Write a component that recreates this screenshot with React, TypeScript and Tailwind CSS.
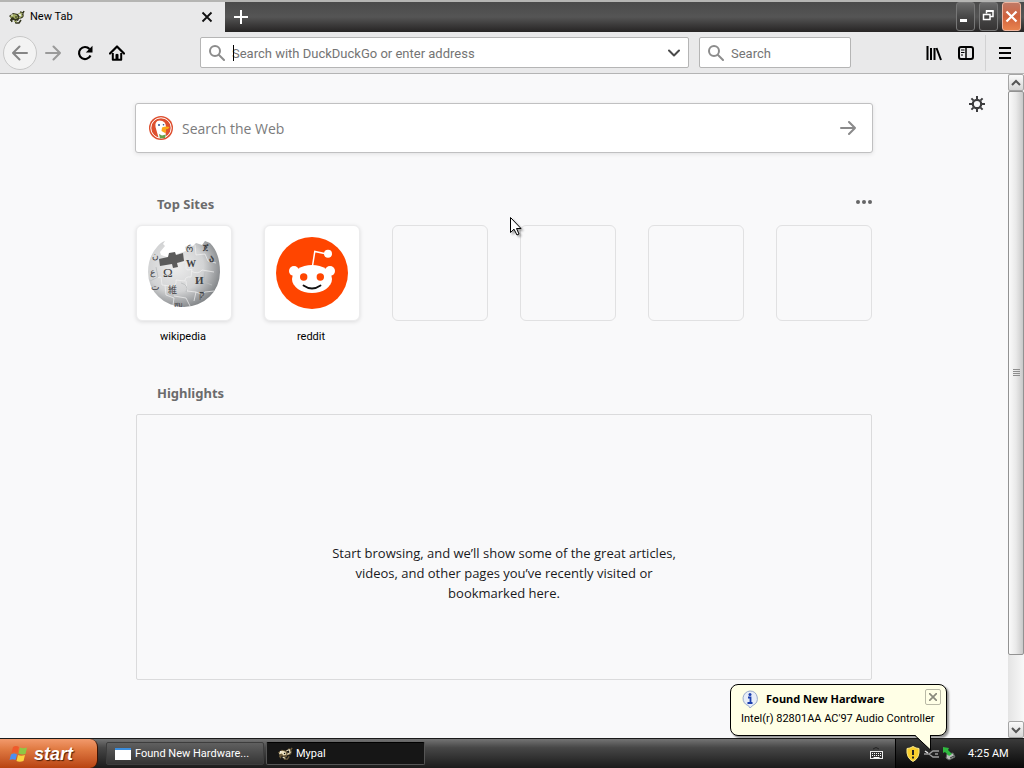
import type { ReactNode } from "react"

export default function App() {
    return (
        <div className="relative flex flex-col h-screen overflow-hidden bg-[#f9f9fa] text-black font-['Roboto',sans-serif]">
            <TabStrip />
            <Toolbar />
            <div className="flex flex-1 min-h-0">
                <NewTabPage />
                <ScrollBar />
            </div>
            <TaskBar />
            <MousePointer />
        </div>
    )
}

function TabStrip() {
    return (
        <header className="flex h-8 shrink-0 border-t-2 border-[#b5b5b3] bg-linear-to-b from-[#4a4a4a] via-[#555555] to-[#262424]">
            <div className="flex items-center w-[225px] bg-[#e9e9ea] pl-2 pr-3">
                <MypalIcon className="w-[17px] h-4" />
                <span className="ml-[5px] flex-1 text-[11px] leading-4">New Tab</span>
                <button aria-label="Close tab" className="size-3">
                    <svg viewBox="0 0 12 12" className="size-3" stroke="#111" strokeWidth="1.8"><path d="M1.5 1.5l9 9M10.5 1.5l-9 9" /></svg>
                </button>
            </div>
            <button aria-label="Open a new tab" className="w-8 grid place-items-center">
                <svg viewBox="0 0 14 14" className="size-3.5" stroke="#fff" strokeWidth="2"><path d="M7 0v14M0 7h14" /></svg>
            </button>
            <div className="ml-auto flex gap-1 pr-[3px] pb-px">
                <WindowButton label="Minimize">
                    <rect x="4" y="15" width="7" height="3" fill="#fff" />
                </WindowButton>
                <WindowButton label="Restore">
                    <path d="M7.500 9.500V7h6.500v5.500h-3" fill="none" stroke="#fff" strokeWidth="1.500" />
                    <path d="M7 7h7.500" stroke="#fff" strokeWidth="2" />
                    <path d="M4.500 10.500h6.500v5h-6.500z" fill="none" stroke="#fff" strokeWidth="1.500" />
                </WindowButton>
                <WindowButton label="Close" red>
                    <path d="M4.500 7.500l10 10M14.500 7.500l-10 10" stroke="#fff" strokeWidth="2.200" />
                </WindowButton>
            </div>
        </header>
    )
}

function WindowButton({ label, red, children }: { label: string, red?: boolean, children: ReactNode }) {
    const color = red
        ? "border-[#efb6a0] bg-linear-to-b from-[#c07a66] via-[#d0613c] to-[#e8834f]"
        : "border-[#777777] bg-linear-to-b from-[#6b6b6b] via-[#484848] to-[#353333]"
    return (
        <button aria-label={label} className={`w-[19px] rounded-[3px] border ${color}`}>
            <svg viewBox="0 0 19 26" className="-ml-px w-[19px] h-[26px]">{children}</svg>
        </button>
    )
}

function Toolbar() {
    return (
        <nav className="flex items-center h-[42px] shrink-0 px-[3px] bg-[#e9e9ea] border-b border-[#b4b4b4]">
            <button aria-label="Back" className="grid place-items-center size-[34px] rounded-full border border-[#c8c8c8] bg-[#f3f3f3]">
                <svg viewBox="0 0 16 16" className="size-4" fill="none" stroke="#858585" strokeWidth="2" strokeLinecap="round" strokeLinejoin="round"><path d="M15 8H1M7.500 1.500L1 8l6.500 6.500" /></svg>
            </button>
            <ToolButton label="Forward">
                <path d="M1 8h14M8.500 1.500L15 8l-6.500 6.500" stroke="#9a9a9a" strokeWidth="2" strokeLinecap="round" strokeLinejoin="round" />
            </ToolButton>
            <ToolButton label="Reload">
                <path d="M13.500 10.500A6 6 0 1 1 12.500 4" stroke="#000" strokeWidth="2.200" />
                <path d="M15.500 .8v6.700H8.800z" fill="#000" />
            </ToolButton>
            <ToolButton label="Home">
                <path d="M1 8.500l7-7 7 7" stroke="#000" strokeWidth="2.200" strokeLinecap="round" strokeLinejoin="round" />
                <path d="M3.800 8v6.800h8.400V8" stroke="#000" strokeWidth="2" strokeLinejoin="round" />
                <path d="M6.500 15V9.500q1.500-1.500 3 0V15z" fill="#000" />
            </ToolButton>
            <label className="relative ml-[67px] flex flex-1 items-center h-[31px] px-2 bg-white border border-[#b5b5b5] rounded-xs">
                <SearchIcon />
                <span className="absolute left-8 h-4 w-px bg-black" />
                <input aria-label="Address" placeholder="Search with DuckDuckGo or enter address" className="ml-[7px] flex-1 min-w-0 pt-0.5 bg-transparent text-[13px] outline-none placeholder:text-[#747474]" />
                <svg viewBox="0 0 12 8" className="w-3 h-2" fill="none" stroke="#4a4a4a" strokeWidth="2" strokeLinecap="round" strokeLinejoin="round"><path d="M1 1.500l5 5 5-5" /></svg>
            </label>
            <label className="ml-2.5 flex items-center w-[152px] h-[31px] px-2 bg-white border border-[#b5b5b5] rounded-xs">
                <SearchIcon />
                <input aria-label="Search" placeholder="Search" className="ml-[7px] flex-1 min-w-0 pt-0.5 bg-transparent text-[13px] outline-none placeholder:text-[#747474]" />
            </label>
            <div className="ml-[67px] flex items-center">
                <ToolButton label="Library">
                    <path d="M1.500 1v14M5 3v12M8.500 3v12M10.500 3l4.500 12" stroke="#000" strokeWidth="2" />
                </ToolButton>
                <ToolButton label="Sidebars">
                    <rect x="1" y="2" width="14" height="12" rx="2" stroke="#000" strokeWidth="2" />
                    <path d="M8 2v12" stroke="#000" strokeWidth="1.500" />
                    <path d="M3 5h3.500M3 7.500h3.500M3 10h2" stroke="#000" strokeWidth="1" />
                </ToolButton>
                <div className="mx-[3px] w-px h-9 bg-[#d2d2d3]" />
                <ToolButton label="Menu">
                    <path d="M2 3h12M2 8h12M2 13h12" stroke="#000" strokeWidth="2" />
                </ToolButton>
            </div>
        </nav>
    )
}

function ToolButton({ label, children }: { label: string, children: ReactNode }) {
    return (
        <button aria-label={label} className="grid place-items-center size-8">
            <svg viewBox="0 0 16 16" className="size-4" fill="none">{children}</svg>
        </button>
    )
}

function SearchIcon() {
    return (
        <svg viewBox="0 0 16 16" className="size-4 shrink-0" fill="none" stroke="#8c8c8c" strokeWidth="2" strokeLinecap="round">
            <circle cx="6" cy="6" r="5" /><path d="M10 10l5 5" />
        </svg>
    )
}

function NewTabPage() {
    return (
        <main className="relative flex-1 overflow-hidden">
            <button aria-label="Customize this page" className="absolute right-[23px] top-[22px] size-4">
                <svg viewBox="0 0 16 16" className="size-4" fill="none" stroke="#3c3c3e" strokeWidth="2">
                    <circle cx="8" cy="8" r="4.200" strokeWidth="2.200" />
                    <path d="M8 0v3M8 13v3M0 8h3M13 8h3M2.400 2.400l2 2M11.600 11.600l2 2M13.600 2.400l-2 2M4.400 11.600l-2 2" />
                </svg>
            </button>
            <div className="mx-auto w-[736px] pt-[29px]">
                <form className="-mx-px flex items-center h-[50px] px-[13px] bg-white border border-[#c0c0c1] rounded-[3px] shadow-[0_1px_4px_rgba(0,0,0,0.1)]">
                    <DuckIcon />
                    <input aria-label="Search the Web" placeholder="Search the Web" className="ml-[9px] flex-1 bg-transparent font-['Open_Sans',sans-serif] text-[14px] outline-none placeholder:text-[#7b7b7c]" />
                    <button type="button" aria-label="Search" className="mr-[3px]">
                        <svg viewBox="0 0 16 16" className="size-4" fill="none" stroke="#8a8a8b" strokeWidth="2" strokeLinecap="round" strokeLinejoin="round"><path d="M1 8h14M9 2l6 6-6 6" /></svg>
                    </button>
                </form>
                <section>
                    <div className="mt-10 flex items-center justify-between h-[22px] pl-[21px]">
                        <h2 className="font-['Noto_Sans',sans-serif] text-[13px] leading-5 font-bold text-[#6b6b6c]">Top Sites</h2>
                        <button aria-label="Open menu" className="mb-1">
                            <svg viewBox="0 0 16 4" className="w-4 h-1" fill="#666"><circle cx="2" cy="2" r="2" /><circle cx="8" cy="2" r="2" /><circle cx="14" cy="2" r="2" /></svg>
                        </button>
                    </div>
                    <ul className="mt-[10px] grid grid-cols-6 gap-8">
                        <Site name="wikipedia"><WikipediaGlobe /></Site>
                        <Site name="reddit"><RedditLogo /></Site>
                        {[0, 1, 2, 3].map((i) => (
                            <li key={i} className="size-24 rounded-md border border-[#e1e1e2]" />
                        ))}
                    </ul>
                </section>
                <section className="mt-[38px]">
                    <h2 className="pl-[21px] font-['Noto_Sans',sans-serif] text-[13px] leading-5 font-bold text-[#6b6b6c]">Highlights</h2>
                    <div className="mt-[11px] grid place-items-center h-[266px] pt-[51px] border border-[#dbdbdc] rounded-xs">
                        <p className="w-[346px] text-center font-['Open_Sans',sans-serif] text-[13px] leading-5 text-[#1a1a1c]">
                            Start browsing, and we’ll show some of the great articles, videos, and other pages you’ve recently visited or bookmarked here.
                        </p>
                    </div>
                </section>
            </div>
        </main>
    )
}

function Site({ name, children }: { name: string, children: ReactNode }) {
    return (
        <li>
            <a href="#" className="flex flex-col items-center">
                <span className="size-24 rounded-md border border-[#ececed] bg-white shadow-[0_1px_4px_rgba(0,0,0,0.12)]">{children}</span>
                <span className="mt-2 mr-0.5 text-[11px] leading-4">{name}</span>
            </a>
        </li>
    )
}

function WikipediaGlobe() {
    return (
        <svg viewBox="1 1 94 94" className="size-[94px]">
            <defs>
                <radialGradient id="globe" cx=".38" cy=".38" r=".65">
                    <stop offset="0" stopColor="#ededed" />
                    <stop offset=".6" stopColor="#d2d3d4" />
                    <stop offset="1" stopColor="#84878a" />
                </radialGradient>
            </defs>
            <path d="M21 22q4-5 8-6l-2 3 2 2-5 6 1 3 6 2 10-3 9-3-1-4 4-2 4 1 3-3 6 2 3-4 5 2Q84 28 84 47A36 35 0 1 1 12 47Q12 32 21 22z" fill="url(#globe)" />
            <path d="M23 34l9-2 1-4 6-1 1 3 7-2 1 8-7 2 1 4-5 1-1-4-12 2z" fill="#5b5b5b" />
            <path d="M46 38q5-3 4 3t6 3l-1 8q-6-1-6 4l-9-1q1 6-5 6l-9-1-1-8-7 1M50 56l1 10 9 1q6 3 9 0l9-1M59 20l1 10 9-1 3 7 8 2M55 46q7 4 11-1l12 2M29 60l1 10 8 3-1 7M38 71l12 2 4 8M60 67l-2 9" fill="none" stroke="#f2f2f2" strokeWidth=".7" />
            <path d="M69 47l-1 10 8 3M45 58q8 2 5 9M20 42l2 10-8 4" fill="none" stroke="#b9bbbd" strokeWidth=".8" />
            <g className="font-['Liberation_Serif',serif]" fill="#3f4144">
                <text x="27" y="52" fontSize="13">Ω</text>
                <text x="50" y="42" fontSize="10" fontWeight="bold">W</text>
                <text x="59" y="59" fontSize="11" fontWeight="bold">И</text>
                <text x="63" y="73" fontSize="10" fontWeight="bold">ק</text>
                <text x="73" y="37" fontSize="10" fontWeight="bold">ა</text>
                <text x="67" y="25" fontSize="8" fontWeight="bold">ጀ</text>
                <text x="50" y="27" fontSize="9">რ</text>
                <text x="14" y="50" fontSize="9">ع</text>
                <text x="16" y="34" fontSize="9">ن</text>
                <text x="15" y="65" fontSize="9">ت</text>
                <text x="38" y="82" fontSize="7">สม</text>
                <text x="32" y="68" fontSize="9" className="font-['Noto_Sans_CJK_JP',sans-serif]">維</text>
            </g>
        </svg>
    )
}

function RedditLogo() {
    return (
        <svg viewBox="1 1 94 94" className="size-[94px]">
            <circle cx="48" cy="48" r="36" fill="#ff4500" />
            <g fill="#fff">
                <ellipse cx="48" cy="54" rx="20" ry="14" />
                <circle cx="30" cy="46" r="5" /><circle cx="66" cy="46" r="5" />
                <circle cx="64" cy="28.700" r="4" />
            </g>
            <path d="M48.500 41l2.300-14.500 12 2.500" fill="none" stroke="#fff" strokeWidth="1.500" />
            <circle cx="39.700" cy="52" r="3.700" fill="#ff4500" /><circle cx="56.300" cy="52" r="3.700" fill="#ff4500" />
            <path d="M39.500 60.500q8.500 6 17 0" fill="none" stroke="#111" strokeWidth="1.800" strokeLinecap="round" />
        </svg>
    )
}

function DuckIcon() {
    return (
        <svg viewBox="0 0 24 24" className="size-6 shrink-0">
            <circle cx="12" cy="12" r="12" fill="#de4f2f" />
            <circle cx="12" cy="12" r="10.200" fill="none" stroke="#fff" strokeWidth="1" />
            <path d="M9.500 21.500L6.500 11Q5.500 5 10.500 4.500q6.500 0 6.500 6.500l-1 4 1.500 6q-4 2-8 .5z" fill="#fff" />
            <path d="M13 11.500q4-1.500 7.500-.5-1 2.500-4.500 2.500 2.500 1.500 0 3.500l-3.500-2z" fill="#fba918" />
            <path d="M10 18l3 1.500 4-1-1 3.500-5 .5z" fill="#67a04a" />
            <circle cx="10" cy="9" r="1" fill="#2d4f8e" /><circle cx="14.500" cy="8.700" r=".8" fill="#2d4f8e" />
        </svg>
    )
}

function MypalIcon({ className, pale }: { className: string, pale?: boolean }) {
    const dark = pale ? "#6b5a3a" : "#33351f"
    const light = pale ? "#eee3c0" : "#a3ad62"
    return (
        <svg viewBox="0 0 17 16" className={className} fill="none">
            <path d="M1 7l4-3 5 1 2 3-2 4-4-1-4 1 1-3z" fill={dark} />
            <path d="M3 6l3-1 3 1 1 3-3 1-2-2-3 1z" fill={light} />
            <path d="M11 9q4 0 4-3l-2-3M12 3l3 1 1-2M3 10l1 3M7 11l1 3 3 0 2-3" stroke={dark} strokeWidth="1.500" />
            <path d="M10 5l3-1 1 3-3 2M6 12l3 1" stroke={light} strokeWidth="1.200" />
            <circle cx="4" cy="6" r=".8" fill="#fff" /><circle cx="8" cy="8" r=".8" fill="#111" />
        </svg>
    )
}

function ScrollBar() {
    return (
        <div aria-hidden="true" className="flex flex-col w-4 shrink-0 bg-linear-to-r from-[#e4e4e4] to-[#f8f8f8]">
            <ScrollArrow d="M1 6l4-4 4 4" />
            <div className="grid flex-17 place-items-center rounded-xs border border-[#929292] bg-linear-to-r from-[#fafafa] via-[#e9e9e9] to-[#c9c9c9]">
                <svg viewBox="0 0 7 8" className="w-[7px] h-2" stroke="#8e8e8e"><path d="M0 .5h7M0 2.500h7M0 4.500h7M0 6.500h7" /></svg>
            </div>
            <div className="flex-2" />
            <ScrollArrow d="M1 2l4 4 4-4" />
        </div>
    )
}

function ScrollArrow({ d }: { d: string }) {
    return (
        <div className="grid place-items-center h-[17px] rounded-xs border border-[#a5a5a5] bg-linear-to-b from-[#fbfbfb] to-[#d6d6d6]">
            <svg viewBox="0 0 10 8" className="w-2.5 h-2" fill="none" stroke="#555" strokeWidth="2"><path d={d} /></svg>
        </div>
    )
}

function TaskBar() {
    return (
        <footer className="flex h-[30px] shrink-0 border-t border-[#1a1a1a] bg-linear-to-b from-[#757575] via-[#474747] via-30% to-[#1c1c1c] text-white">
            <button className="flex items-center w-[98px] pl-[9px] rounded-r-lg border-r border-[#3a1405] bg-linear-to-b from-[#f29a6c] via-[#e07a42] via-35% to-[#b8430f]">
                <svg viewBox="0 0 20 18" className="w-5 h-[18px]">
                    <path d="M4 2q3-2 6 0L8.500 8q-3-1.500-6 0z" fill="#ef5a2b" />
                    <path d="M11 2.500q3 1.500 7 0L16.500 9q-3 1-7-.5z" fill="#8fc744" />
                    <path d="M2 9.500q3-2 6 0L6.500 15q-3-1.500-6 0z" fill="#4d8ff0" />
                    <path d="M9 10q3 1.500 7 0l-1.500 6q-4 1.500-7 0z" fill="#fbd33f" />
                </svg>
                <span className="ml-[5px] font-['Liberation_Sans',sans-serif] text-lg leading-5 font-bold italic [text-shadow:1px_1px_1px_#4a1c05]">start</span>
            </button>
            <div className="ml-2 flex flex-1 gap-0.5 py-[3px]">
                <button className="flex items-center w-[158px] px-2 rounded-xs border border-[#3d3d3d] bg-linear-to-b from-[#606060] to-[#353535]">
                    <svg viewBox="0 0 16 12" className="w-4 h-3 shrink-0"><rect width="16" height="12" fill="#fff" /><rect width="16" height="2" fill="#3b8ede" /></svg>
                    <span className="ml-1 text-[11px] leading-4 whitespace-nowrap">Found New Hardware...</span>
                </button>
                <button className="flex items-center w-[159px] pl-[10px] rounded-xs border border-[#555555] border-t-black bg-[#161616]">
                    <MypalIcon pale className="w-4 h-[15px] shrink-0" />
                    <span className="ml-[3px] text-[11px] leading-4">Mypal</span>
                </button>
            </div>
            <svg viewBox="0 0 13 12" className="mr-3 mt-2 w-[13px] h-3" fill="none">
                <rect x=".5" y="4.500" width="12" height="7" stroke="#eee" fill="#333" />
                <path d="M2 6.500h9M2 8.500h9" stroke="#fff" strokeDasharray="1 1" />
                <path d="M3.500 10.500h6" stroke="#fff" />
                <path d="M3 2q3-3 6 0" stroke="#222" />
            </svg>
            <div className="relative flex items-center w-[129px] pl-[10px] border-l border-black bg-linear-to-b from-[#3b3b3b] to-[#090909]">
                <svg viewBox="0 0 14 16" className="w-3.5 h-4">
                    <path d="M7 .5q3 2 6 2Q14 12 7 15.500 0 12 1 2.500q3 0 6-2z" fill="#f9ce2c" stroke="#fae98a" />
                    <path d="M7 4v5M7 10.500v2" stroke="#222" strokeWidth="2" />
                </svg>
                <svg viewBox="0 0 16 12" className="ml-1 w-4 h-3" fill="none" stroke="#9b9b9b" strokeWidth="1.500">
                    <path d="M0 6h5l4-3h6M5 6l4 3h6M11 6h3" /><path d="M1 3l3 2" stroke="#e6e6e6" />
                </svg>
                <svg viewBox="0 0 14 15" className="ml-0.5 w-3.5 h-[15px]">
                    <path d="M5 8l6-1 2 4-6 3-3-2z" fill="#b9beba" stroke="#5e6460" />
                    <path d="M1 1l6 1-1 2 4 4-3 2-4-4-2 1z" fill="#2fb83f" /><path d="M8 12l4-2" stroke="#333" />
                </svg>
                <span className="ml-3 text-[11px] leading-4">4:25 AM</span>
                <HardwareBalloon />
            </div>
        </footer>
    )
}

function HardwareBalloon() {
    return (
        <div role="status" className="absolute right-[77px] bottom-8 w-[217px] h-[52px] rounded-lg border border-black bg-[#ffffe6] px-[10px] pt-[5px] text-black shadow-[2px_2px_2px_rgba(0,0,0,0.4)]">
            <div className="flex items-center h-[18px]">
                <svg viewBox="0 0 18 18" className="size-[18px]">
                    <path d="M9 1a7.500 7.500 0 0 1 3 14.300L9 18l-1.500-2.300A7.500 7.500 0 0 1 9 1z" fill="#e7edf8" stroke="#98a9cb" />
                    <circle cx="9" cy="4.500" r="1.500" fill="#1b3fae" /><path d="M7 7.500h2.500v5M6.500 13h5" fill="none" stroke="#1b3fae" strokeWidth="1.800" />
                </svg>
                <strong className="ml-[7px] font-['Noto_Sans',sans-serif] text-[11px] leading-4 font-bold">Found New Hardware</strong>
            </div>
            <p className="mt-[3px] text-[11px] leading-4 whitespace-nowrap">Intel(r) 82801AA AC'97 Audio Controller</p>
            <button aria-label="Close" className="absolute right-[5px] top-1 grid place-items-center size-4 rounded-xs border border-[#b9b9a6]">
                <svg viewBox="0 0 8 8" className="size-2" stroke="#8a8a7d" strokeWidth="1.700"><path d="M0 0l8 8M8 0L0 8" /></svg>
            </button>
            <svg viewBox="0 0 18 16" className="absolute right-[14px] -bottom-4 w-[18px] h-4">
                <path d="M1 0L16.500 15V0z" fill="#ffffe6" /><path d="M1 .5L16.500 15V0" fill="none" stroke="#000" />
            </svg>
        </div>
    )
}

function MousePointer() {
    return (
        <svg viewBox="0 0 14 21" className="absolute left-[509px] top-[216px] w-3.5 h-[21px] drop-shadow-[2px_2px_1px_rgba(0,0,0,0.35)] pointer-events-none">
            <path d="M1.500 1.500v15l3.500-3.300 3 5.800 2-1-2.500-5.500H12z" fill="#fff" stroke="#000" />
        </svg>
    )
}
